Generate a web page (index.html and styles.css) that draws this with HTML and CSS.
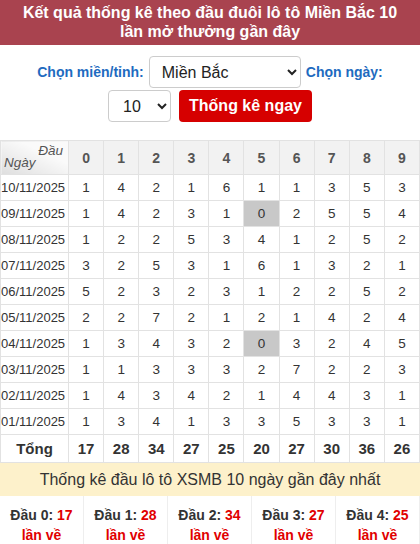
FILE: index.html
```html
<!DOCTYPE html>
<html lang="vi">
<head>
<meta charset="utf-8">
<link rel="stylesheet" href="styles.css">
</head>
<body>
<h1 class="title">Kết quả thống kê theo đầu đuôi lô tô Miền Bắc 10 lần mở thưởng gần đây</h1>
<form class="filter">
  <div class="frow">
    <label class="lbl">Chọn miền/tỉnh:</label>
    <select class="sel sel-region"><option>Miền Bắc</option></select>
    <label class="lbl">Chọn ngày:</label>
  </div>
  <div class="frow">
    <select class="sel sel-day"><option>10</option></select>
    <button type="button" class="btn">Thống kê ngay</button>
  </div>
</form>
<table class="stats">
  <thead>
    <tr>
      <th class="corner"><span class="c-dau">Đầu</span><span class="c-ngay">Ngày</span></th>
      <th>0</th><th>1</th><th>2</th><th>3</th><th>4</th><th>5</th><th>6</th><th>7</th><th>8</th><th>9</th>
    </tr>
  </thead>
  <tbody>
    <tr><td class="date">10/11/2025</td><td>1</td><td>4</td><td>2</td><td>1</td><td>6</td><td>1</td><td>1</td><td>3</td><td>5</td><td>3</td></tr>
    <tr><td class="date">09/11/2025</td><td>1</td><td>4</td><td>2</td><td>3</td><td>1</td><td class="zero">0</td><td>2</td><td>5</td><td>5</td><td>4</td></tr>
    <tr><td class="date">08/11/2025</td><td>1</td><td>2</td><td>2</td><td>5</td><td>3</td><td>4</td><td>1</td><td>2</td><td>5</td><td>2</td></tr>
    <tr><td class="date">07/11/2025</td><td>3</td><td>2</td><td>5</td><td>3</td><td>1</td><td>6</td><td>1</td><td>3</td><td>2</td><td>1</td></tr>
    <tr><td class="date">06/11/2025</td><td>5</td><td>2</td><td>3</td><td>2</td><td>3</td><td>1</td><td>2</td><td>2</td><td>5</td><td>2</td></tr>
    <tr><td class="date">05/11/2025</td><td>2</td><td>2</td><td>7</td><td>2</td><td>1</td><td>2</td><td>1</td><td>4</td><td>2</td><td>4</td></tr>
    <tr><td class="date">04/11/2025</td><td>1</td><td>3</td><td>4</td><td>3</td><td>2</td><td class="zero">0</td><td>3</td><td>2</td><td>4</td><td>5</td></tr>
    <tr><td class="date">03/11/2025</td><td>1</td><td>1</td><td>3</td><td>3</td><td>3</td><td>2</td><td>7</td><td>2</td><td>2</td><td>3</td></tr>
    <tr><td class="date">02/11/2025</td><td>1</td><td>4</td><td>3</td><td>4</td><td>2</td><td>1</td><td>4</td><td>4</td><td>3</td><td>1</td></tr>
    <tr><td class="date">01/11/2025</td><td>1</td><td>3</td><td>4</td><td>1</td><td>3</td><td>3</td><td>5</td><td>3</td><td>3</td><td>1</td></tr>
    <tr class="total"><td class="date">Tổng</td><td>17</td><td>28</td><td>34</td><td>27</td><td>25</td><td>20</td><td>27</td><td>30</td><td>36</td><td>26</td></tr>
  </tbody>
</table>
<div class="banner">Thống kê đầu lô tô XSMB 10 ngày gần đây nhất</div>
<div class="cards">
  <div class="card"><b>Đầu 0: </b><span class="red">17</span><br><span class="red">lần về</span></div>
  <div class="card"><b>Đầu 1: </b><span class="red">28</span><br><span class="red">lần về</span></div>
  <div class="card"><b>Đầu 2: </b><span class="red">34</span><br><span class="red">lần về</span></div>
  <div class="card"><b>Đầu 3: </b><span class="red">27</span><br><span class="red">lần về</span></div>
  <div class="card"><b>Đầu 4: </b><span class="red">25</span><br><span class="red">lần về</span></div>
</div>
</body>
</html>
```
FILE: styles.css
```css
html, body {
  margin: 0;
  padding: 0;
  background: #fff;
  font-family: "Liberation Sans", Arial, sans-serif;
  color: #333;
}

.title {
  margin: 0;
  background: #a9434f;
  color: #fff;
  font-size: 16px;
  font-weight: bold;
  line-height: 19px;
  text-align: center;
  padding: 3px 20px 4px;
  height: 38px;
}

.filter {
  display: flex;
  flex-direction: column;
  align-items: center;
  gap: 2px;
  padding-top: 11px;
  height: 95px;
  box-sizing: border-box;
}

.frow {
  display: flex;
  align-items: center;
  justify-content: center;
  gap: 5px;
}

.lbl {
  color: #1e6bc0;
  font-weight: bold;
  font-size: 14px;
}

.sel {
  height: 32px;
  border: 1px solid #ccc;
  border-radius: 4px;
  background: #fff;
  font-family: "Liberation Sans", Arial, sans-serif;
  font-size: 16px;
  color: #222;
  padding: 0 6px 0 8px;
}

.sel-region { width: 152px; }
.sel-day { width: 63px; padding-left: 10px; }

.btn {
  height: 32px;
  margin-left: 3px;
  background: #d60000;
  color: #fff;
  border: none;
  border-radius: 4px;
  font-family: "Liberation Sans", Arial, sans-serif;
  font-weight: bold;
  font-size: 16px;
  padding: 0 10px;
}

.stats {
  width: 100%;
  border-collapse: collapse;
  table-layout: fixed;
  font-size: 13px;
  color: #333;
}

.stats th, .stats td {
  border: 1px solid #e2e2e2;
  text-align: center;
  padding: 0;
}

.stats th {
  background: #f2f2f2;
  color: #555;
  font-weight: bold;
  font-size: 14px;
  height: 33px;
}

.stats th.corner {
  width: 67px;
  position: relative;
  background: linear-gradient(205deg, #fafafa 35%, #dedede 100%);
  font-weight: normal;
  font-style: italic;
  font-size: 13.5px;
}

.c-dau {
  position: absolute;
  top: 2px;
  right: 5px;
}

.c-ngay {
  position: absolute;
  bottom: 4px;
  left: 3px;
}

.stats td {
  height: 25px;
  font-size: 13.5px;
}

.stats td.date {
  font-size: 13px;
  white-space: nowrap;
  overflow: hidden;
  text-align: left;
  padding-left: 0;
}

.stats td.zero {
  background: #c8c8c8;
}

.stats tr.total td {
  height: 27px;
  font-weight: bold;
  font-size: 15px;
  color: #333;
}

.stats tr.total td.date {
  text-align: center;
}

.banner {
  background: #fdf1cb;
  color: #333;
  text-align: center;
  font-size: 16px;
  line-height: 33px;
  height: 33px;
}

.cards {
  display: grid;
  grid-template-columns: repeat(5, 1fr);
}

.card {
  border-right: 1px solid #eee;
  text-align: center;
  font-size: 14px;
  line-height: 20px;
  padding-top: 9px;
  color: #333;
}

.card b { font-weight: bold; }

.red {
  color: #e10000;
  font-weight: bold;
}
```
